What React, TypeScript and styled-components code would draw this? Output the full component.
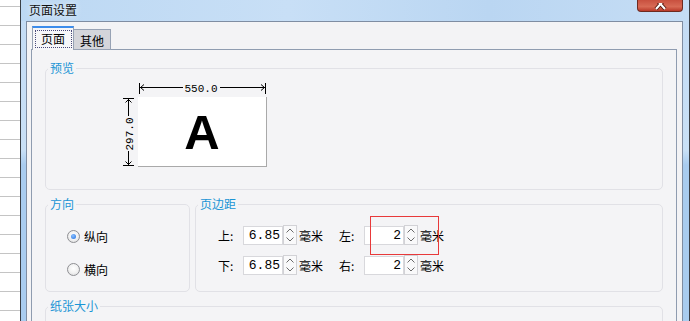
import React from "react";
import styled, { createGlobalStyle } from "styled-components";

const GlobalStyle = createGlobalStyle`
  html, body {
    margin: 0;
    padding: 0;
  }
  body {
    width: 690px;
    height: 321px;
    overflow: hidden;
    background: #ffffff;
    font-family: "Noto Sans CJK SC", "Liberation Sans", sans-serif;
    font-size: 12px;
    color: #000;
  }
`;

const Screen = styled.div`
  display: flex;
  height: 321px;
`;

const Sheet = styled.div`
  flex: none;
  width: 20px;
  background: repeating-linear-gradient(
    to bottom,
    #ffffff 0 6px,
    #c4c4c4 6px 7px,
    #ffffff 7px 19px
  );
`;

const Window = styled.div`
  flex: 1;
  display: flex;
  flex-direction: column;
  border-left: 1px solid #3a3f46;
  border-right: 1px solid #3a3f46;
  background: linear-gradient(
    to bottom,
    #c3dbf4 0,
    #c9e0f6 150px,
    #a9ccef 165px,
    #a9ccef 100%
  );
`;

const TitleBar = styled.div`
  flex: none;
  height: 21px;
  display: flex;
  align-items: flex-start;
  padding: 0 6px 0 8px;
  background: linear-gradient(to right, #bcd8f3, #c8dff6 40%, #bad6f2 70%, #c5ddf5);
`;

const Title = styled.span`
  margin-top: 2px;
  font-size: 12px;
  line-height: 15px;
  color: #111;
  text-shadow: 0 0 6px rgba(255, 255, 255, 0.9);
`;

const CloseButton = styled.div`
  margin-left: auto;
  width: 46px;
  height: 12px;
  box-sizing: border-box;
  border: 1px solid #6e2a20;
  border-top: none;
  border-radius: 0 0 4px 4px;
  background: linear-gradient(to bottom, #c8503f, #d86a55 60%, #b93a2a);
  overflow: hidden;
`;

const Client = styled.div`
  flex: 1;
  display: flex;
  flex-direction: column;
  margin: 0 6px 0 5px;
  padding: 5px 5px 0 4px;
  border: 1px solid #7f8da2;
  border-bottom: none;
  background: #f3f3f5;
`;

const TabStrip = styled.div`
  display: flex;
  align-items: flex-end;
  height: 23px;
  padding-left: 1px;
  margin-bottom: -1px;
  position: relative;
  z-index: 1;
`;

const Tab = styled.div<{ $active?: boolean }>`
  box-sizing: border-box;
  display: flex;
  align-items: center;
  justify-content: center;
  height: ${({ $active }) => ($active ? "24px" : "21px")};
  width: ${({ $active }) => ($active ? "42px" : "37px")};
  border: 1px solid #97a2b4;
  border-bottom: ${({ $active }) => ($active ? "none" : "1px solid #97a2b4")};
  border-top: ${({ $active }) =>
    $active ? "2px solid #3c8ceb" : "1px solid #97a2b4"};
  border-left: ${({ $active }) => ($active ? "1px solid #97a2b4" : "none")};
  background: ${({ $active }) => ($active ? "#f6f6f8" : "#d4d5da")};
  font-size: 12px;
  line-height: 14px;
  padding-top: ${({ $active }) => ($active ? "0" : "2px")};
`;

const FocusRing = styled.span`
  box-sizing: border-box;
  display: flex;
  align-items: center;
  justify-content: center;
  width: 37px;
  height: 18px;
  border: 1px dotted #4a4a7a;
`;

const TabPanel = styled.div`
  flex: 1;
  display: flex;
  flex-direction: column;
  gap: 7px;
  padding: 11px 13px 0 13px;
  border: 1px solid #8f9cb0;
  border-bottom: none;
  background: #f4f4f6;
`;

const Group = styled.fieldset<{ $width?: number }>`
  margin: 0;
  padding: 0;
  min-width: 0;
  border: 1px solid #e1e1e6;
  border-radius: 5px;
  ${({ $width }) => ($width ? `width: ${$width}px; flex: none;` : "flex: 1;")}
  box-sizing: border-box;
`;

const Legend = styled.legend`
  margin-left: 2px;
  padding: 0 2px;
  font-size: 12px;
  line-height: 14px;
  color: #1b95d5;
`;

const GroupRow = styled.div`
  display: flex;
  gap: 5px;
`;

const Preview = styled.div`
  display: grid;
  grid-template-columns: 16px 129px;
  grid-template-rows: 15px 70px;
  margin: 7px 0 22px 76px;
`;

const Paper = styled.div`
  box-sizing: border-box;
  display: flex;
  align-items: center;
  justify-content: center;
  background: #ffffff;
  border-right: 1px solid #a9a9a9;
  border-bottom: 1px solid #a9a9a9;
  font-family: "Liberation Sans", Arial, sans-serif;
  font-weight: bold;
  font-size: 49px;
  line-height: 1;
  padding-top: 1px;
`;

const DimText = styled.text`
  font-family: "Liberation Mono", monospace;
  font-size: 11px;
  fill: #000;
`;

const RadioList = styled.div`
  display: flex;
  flex-direction: column;
  gap: 13px;
  margin: 15px 0 12px 21px;
`;

const RadioRow = styled.label`
  display: flex;
  align-items: center;
  height: 20px;
  gap: 4px;
  font-size: 12px;
`;

const RadioDot = styled.span<{ $checked?: boolean }>`
  box-sizing: border-box;
  display: flex;
  align-items: center;
  justify-content: center;
  width: 13px;
  height: 13px;
  border-radius: 50%;
  border: 1px solid #8e8f93;
  background: radial-gradient(circle at 50% 40%, #ffffff 0, #f2f2f2 50%, #d6d6d9 100%);

  &::after {
    content: "";
    display: ${({ $checked }) => ($checked ? "block" : "none")};
    width: 5px;
    height: 5px;
    border-radius: 50%;
    background: radial-gradient(circle at 40% 35%, #8cc0ff, #1f6fe0);
  }
`;

const MarginGrid = styled.div`
  display: flex;
  flex-direction: column;
  gap: 10px;
  margin: 14px 0 16px 22px;
`;

const MarginRow = styled.div`
  display: flex;
  align-items: center;
  height: 20px;
`;

const FieldLabel = styled.span<{ $gap?: number }>`
  width: 25px;
  margin-left: ${({ $gap }) => $gap ?? 0}px;
  font-size: 12px;
`;

const Field = styled.div`
  position: relative;
  display: flex;
  align-items: center;
`;

const NumberBox = styled.div`
  box-sizing: border-box;
  width: 40px;
  height: 19px;
  padding-right: 2px;
  border: 1px solid #d8d8dc;
  background: #ffffff;
  font-family: "Liberation Mono", monospace;
  font-size: 13px;
  line-height: 17px;
  text-align: right;
`;

const Spinner = styled.div`
  box-sizing: border-box;
  display: flex;
  flex-direction: column;
  width: 14px;
  height: 20px;
  border: 1px solid #d2d2d6;
  background: #f9f9fa;
`;

const SpinHalf = styled.div`
  flex: 1;
  display: flex;
  align-items: center;
  justify-content: center;
`;

const Unit = styled.span`
  margin-left: 2px;
  font-size: 12px;
`;

const Highlight = styled.span`
  position: absolute;
  left: 5px;
  top: -10px;
  width: 71px;
  height: 41px;
  box-sizing: border-box;
  border: 1px solid transparent;
  box-shadow: inset 0 0 0 1px #e8393a;
  pointer-events: none;
`;

const PaperSizeBody = styled.div`
  height: 60px;
`;

const Chevron = ({ up }: { up?: boolean }) => (
  <svg width="8" height="5" viewBox="0 0 8 5">
    <path
      d={up ? "M0.5 4.5 L4 1 L7.5 4.5" : "M0.5 0.5 L4 4 L7.5 0.5"}
      fill="none"
      stroke="#6a6a6a"
      strokeWidth="1"
    />
  </svg>
);

const SpinField = ({ value, highlighted }: { value: string; highlighted?: boolean }) => (
  <Field>
    <NumberBox>{value}</NumberBox>
    <Spinner>
      <SpinHalf>
        <Chevron up />
      </SpinHalf>
      <SpinHalf>
        <Chevron />
      </SpinHalf>
    </Spinner>
    <Unit>毫米</Unit>
    {highlighted && <Highlight />}
  </Field>
);

const TopDimension = () => (
  <svg width="129" height="15" viewBox="0 0 129 15">
    <g stroke="#000" strokeWidth="1" fill="none">
      <path d="M1.5 1 V12 M127.5 1 V12" />
      <path d="M2 5.5 H45 M82 5.5 H127" />
      <path d="M6 2.5 L2.5 5.5 L6 8.5 M123 2.5 L126.5 5.5 L123 8.5" />
    </g>
    <DimText x="63" y="10" textAnchor="middle">
      550.0
    </DimText>
  </svg>
);

const LeftDimension = () => (
  <svg width="16" height="70" viewBox="0 0 16 70">
    <g stroke="#000" strokeWidth="1" fill="none">
      <path d="M1 1.5 H12 M1 68.5 H12" />
      <path d="M6.5 2 V19 M6.5 54 V68" />
      <path d="M3.5 5.5 L6.5 2.5 L9.5 5.5 M3.5 64.5 L6.5 67.5 L9.5 64.5" />
    </g>
    <DimText x="0" y="0" textAnchor="middle" transform="translate(10.5 37) rotate(-90)">
      297.0
    </DimText>
  </svg>
);

const CloseGlyph = () => (
  <svg width="44" height="11" viewBox="0 0 44 11">
    <path d="M18 -4 L27 6 M27 -4 L18 6" stroke="#5a1d14" strokeWidth="4" />
    <path d="M18 -4 L27 6 M27 -4 L18 6" stroke="#ffffff" strokeWidth="2" />
  </svg>
);

const App: React.FC = () => {
  return (
    <>
      <GlobalStyle />
      <Screen>
        <Sheet />
        <Window>
          <TitleBar>
            <Title>页面设置</Title>
            <CloseButton>
              <CloseGlyph />
            </CloseButton>
          </TitleBar>
          <Client>
            <TabStrip>
              <Tab $active>
                <FocusRing>页面</FocusRing>
              </Tab>
              <Tab>其他</Tab>
            </TabStrip>
            <TabPanel>
              <Group>
                <Legend>预览</Legend>
                <Preview>
                  <span />
                  <TopDimension />
                  <LeftDimension />
                  <Paper>A</Paper>
                </Preview>
              </Group>
              <GroupRow>
                <Group $width={145}>
                  <Legend>方向</Legend>
                  <RadioList>
                    <RadioRow>
                      <RadioDot $checked />
                      纵向
                    </RadioRow>
                    <RadioRow>
                      <RadioDot />
                      横向
                    </RadioRow>
                  </RadioList>
                </Group>
                <Group>
                  <Legend>页边距</Legend>
                  <MarginGrid>
                    <MarginRow>
                      <FieldLabel>上:</FieldLabel>
                      <SpinField value="6.85" />
                      <FieldLabel $gap={16}>左:</FieldLabel>
                      <SpinField value="2" highlighted />
                    </MarginRow>
                    <MarginRow>
                      <FieldLabel>下:</FieldLabel>
                      <SpinField value="6.85" />
                      <FieldLabel $gap={16}>右:</FieldLabel>
                      <SpinField value="2" />
                    </MarginRow>
                  </MarginGrid>
                </Group>
              </GroupRow>
              <Group>
                <Legend>纸张大小</Legend>
                <PaperSizeBody />
              </Group>
            </TabPanel>
          </Client>
        </Window>
      </Screen>
    </>
  );
};

export default App;
